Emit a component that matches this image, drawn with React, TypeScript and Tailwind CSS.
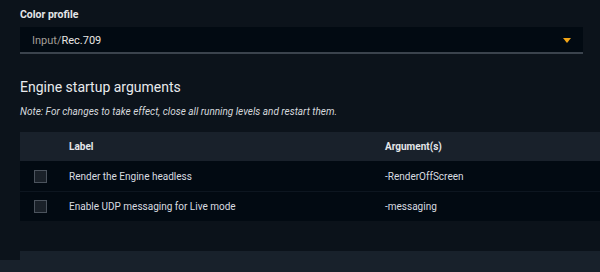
import React from "react";

type Arg = { label: string; arg: string };

const args: Arg[] = [
  { label: "Render the Engine headless", arg: "-RenderOffScreen" },
  { label: "Enable UDP messaging for Live mode", arg: "-messaging" },
];

function Checkbox() {
  return <div className="w-[13px] h-[13px] border border-[#4b535d] bg-[#1a2129]" />;
}

export default function App() {
  return (
    <div className="w-[600px] h-[272px] overflow-hidden bg-[#0c131b] text-[#e4e6e9] font-['Roboto',sans-serif]">
      <div className="pl-5">
        {/* color profile */}
        <div className="pt-[7px] h-[27px] text-[10.5px] font-bold leading-[16px]">Color profile</div>
        <div className="w-[563px] h-[27px] bg-[#020a12] border-b-2 border-[#3b434d] flex items-center justify-between pl-3 pr-[12px] pt-[3px] text-[11px]">
          <span>
            <span className="text-[#a39e98]">Input/</span>
            <span className="text-[#e8e6e3]">Rec.709</span>
          </span>
          <svg width="8" height="5" viewBox="0 0 8 5" className="-mt-[2px]">
            <path d="M0 0h8L4 5z" fill="#f2a516" />
          </svg>
        </div>

        {/* startup args */}
        <div className="mt-[23px] text-[14px] leading-[20px] text-[#e8eaed]">Engine startup arguments</div>
        <div className="mt-[8px] text-[10px] italic leading-[14px] text-[#d6d9dd]">
          Note: For changes to take effect, close all running levels and restart them.
        </div>

        <div className="mt-[13px] w-[580px]">
          <div className="h-[29px] bg-[#19212b] grid grid-cols-[49px_316px_1fr] items-center text-[10px] font-bold">
            <div />
            <div>Label</div>
            <div>Argument(s)</div>
          </div>
          {args.map((a, i) => (
            <div
              key={a.arg}
              className={
                "h-[30px] bg-[#020a12] grid grid-cols-[49px_316px_1fr] items-center text-[10px] text-[#d9dce0] " +
                (i > 0 ? "border-t border-[#0d1620]" : "")
              }
            >
              <div className="pl-[14px]">
                <Checkbox />
              </div>
              <div>{a.label}</div>
              <div>{a.arg}</div>
            </div>
          ))}
          <div className="h-[30px] bg-[#0b121a]" />
          <div className="h-[9px] bg-[#18212b]" />
        </div>
      </div>
      <div className="h-[20px] bg-[#18212b]" />
    </div>
  );
}
